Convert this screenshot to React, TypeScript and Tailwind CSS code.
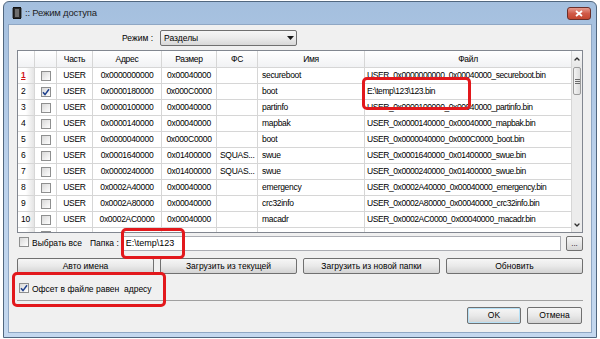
import { ChevronDown, ChevronUp } from "lucide-react";

type Row = {
  n: number;
  chk?: boolean;
  addr: string;
  size: string;
  fs?: string;
  name: string;
  file: string;
};

const rows: Row[] = [
  { n: 1, addr: "0x0000000000", size: "0x00040000", name: "secureboot", file: "USER_0x0000000000_0x00040000_secureboot.bin" },
  { n: 2, chk: true, addr: "0x0000180000", size: "0x000C0000", name: "boot", file: "E:\\temp\\123\\123.bin" },
  { n: 3, addr: "0x0000100000", size: "0x00040000", name: "partinfo", file: "USER_0x0000100000_0x00040000_partinfo.bin" },
  { n: 4, addr: "0x0000140000", size: "0x00040000", name: "mapbak", file: "USER_0x0000140000_0x00040000_mapbak.bin" },
  { n: 5, addr: "0x0000040000", size: "0x000C0000", name: "boot", file: "USER_0x0000040000_0x000C0000_boot.bin" },
  { n: 6, addr: "0x0001640000", size: "0x01400000", fs: "SQUAS...", name: "swue", file: "USER_0x0001640000_0x01400000_swue.bin" },
  { n: 7, addr: "0x0000240000", size: "0x01400000", fs: "SQUAS...", name: "swue", file: "USER_0x0000240000_0x01400000_swue.bin" },
  { n: 8, addr: "0x0002A40000", size: "0x00040000", name: "emergency", file: "USER_0x0002A40000_0x00040000_emergency.bin" },
  { n: 9, addr: "0x0002A80000", size: "0x00040000", name: "crc32info", file: "USER_0x0002A80000_0x00040000_crc32info.bin" },
  { n: 10, addr: "0x0002AC0000", size: "0x00040000", name: "macadr", file: "USER_0x0002AC0000_0x00040000_macadr.bin" },
];

const cols = "grid grid-cols-[17px_22px_36px_69px_55px_41px_107px_206px]";
const cell = "flex items-center border-r border-[#d6d6d6] overflow-hidden whitespace-nowrap";

function Box({ checked }: { checked?: boolean }) {
  return (
    <span className="inline-flex h-[10px] w-[10px] shrink-0 items-center justify-center border border-[#8e8f8f] bg-gradient-to-br from-[#d8d8d8] to-white">
      {checked && (
        <svg viewBox="0 0 8 8" className="h-[8px] w-[8px]">
          <path d="M1 4.2 L3 6.6 L7 1.2" fill="none" stroke="#1d3f8c" strokeWidth="1.5" />
        </svg>
      )}
    </span>
  );
}

function Btn({ children, className = "" }: { children: React.ReactNode; className?: string }) {
  return (
    <div
      className={
        "flex h-[16px] items-center justify-center rounded-[2px] border border-[#707070] bg-gradient-to-b from-[#f6f6f6] via-[#e9e9e9] to-[#d3d3d3] text-[8.5px] text-black " +
        className
      }
    >
      {children}
    </div>
  );
}

function Annot({ className }: { className: string }) {
  return <div className={"pointer-events-none absolute rounded-[5px] border-[3px] border-[#e2181c] " + className} />;
}

export default function App() {
  return (
    <div className="relative h-[339px] w-[600px] bg-white pb-[1px] pl-[3px] pr-[3px] pt-[1px] font-['Liberation_Sans',Arial,sans-serif] text-black">
      <div className="flex h-full flex-col rounded-t-[6px] border border-[#51677f] bg-gradient-to-b from-[#a4bfde] via-[#bcd2ec] to-[#c4d8ef]">
        {/* title */}
        <div className="flex h-[22px] shrink-0 items-center pl-[8px] pr-[5px]">
          <svg viewBox="0 0 10 12" className="h-[12px] w-[10px]">
            <rect x="1.5" y="0.5" width="7" height="11" fill="#2a2a2a" stroke="#111" />
            <rect x="3" y="2" width="4" height="8" fill="#6d6d6d" />
            <path d="M0 2h1.5M0 4h1.5M0 6h1.5M0 8h1.5M0 10h1.5M8.5 2h1.5M8.5 4h1.5M8.5 6h1.5M8.5 8h1.5M8.5 10h1.5" stroke="#333" strokeWidth="1" />
          </svg>
          <span className="ml-[3px] text-[9.5px] tracking-[-0.2px] text-[#1e1e1e]">:: Режим доступа</span>
          <div className="ml-auto flex h-[13px] w-[24px] items-center justify-center rounded-[3px] border border-[#6b2f2a] bg-gradient-to-b from-[#e59a8e] via-[#d05a48] to-[#c4462f]">
            <svg viewBox="0 0 8 7" className="h-[7px] w-[8px]">
              <path d="M1 1L7 6M7 1L1 6" stroke="#fff" strokeWidth="1.8" />
            </svg>
          </div>
        </div>

        {/* client */}
        <div className="mx-[4px] mb-[4px] flex flex-1 flex-col border border-[#8fa7c4] bg-[#f0f0f0] px-[8px] pt-[5px]">
          {/* mode */}
          <div className="flex h-[16px] items-center">
            <div className="w-[136px] text-right text-[8.5px]">Режим :</div>
            <div className="ml-[7px] flex h-[16px] w-[137px] items-center rounded-[2px] border border-[#707070] bg-gradient-to-b from-[#f6f6f6] via-[#ebebeb] to-[#d8d8d8] pl-[3px] pr-[2px] text-[8.5px]">
              <span>Разделы</span>
              <svg viewBox="0 0 7 4" className="ml-auto h-[4px] w-[7px]">
                <path d="M0 0H7L3.5 4Z" fill="#1a1a1a" />
              </svg>
            </div>
          </div>

          {/* grid */}
          <div className="mt-[4px] flex h-[183px] overflow-hidden border border-[#828790] bg-white text-[8.5px] tracking-[-0.3px]">
            <div className="flex-1 overflow-hidden">
              <div className={cols + " h-[17px] border-b border-[#d6d6d6] bg-gradient-to-b from-white to-[#f1f2f4]"}>
                {["", "", "Часть", "Адрес", "Размер", "ФС", "Имя", "Файл"].map((h, i) => (
                  <div key={i} className={cell + " justify-center " + (i === 7 ? "border-r-0" : "")}>
                    {h}
                  </div>
                ))}
              </div>
              {rows.map((r) => (
                <div key={r.n} className={cols + " h-[16px] border-b border-[#d6d6d6]"}>
                  <div className={cell + " bg-gradient-to-r from-white via-white to-[#e4e4e4] pl-[3px]"}>
                    <span className={r.n === 1 ? "font-bold text-[#d0161b] underline" : ""}>{r.n}</span>
                  </div>
                  <div className={cell + " justify-center"}>
                    <Box checked={r.chk} />
                  </div>
                  <div className={cell + " justify-center"}>USER</div>
                  <div className={cell + " justify-center"}>{r.addr}</div>
                  <div className={cell + " justify-center"}>{r.size}</div>
                  <div className={cell + " pl-[3px]"}>{r.fs}</div>
                  <div className={cell + " pl-[4px]"}>{r.name}</div>
                  <div className={cell + " border-r-0 pl-[2px] tracking-[-0.42px]"}>{r.file}</div>
                </div>
              ))}
              {/* next row, mostly scrolled out of view */}
              <div className={cols + " h-[16px]"}>
                <div className={cell + " bg-gradient-to-r from-white via-white to-[#e4e4e4]"} />
                <div className={cell + " items-start justify-center pt-[3px]"}>
                  <Box />
                </div>
                <div className={cell} />
                <div className={cell} />
                <div className={cell} />
                <div className={cell} />
                <div className={cell} />
                <div className={cell + " border-r-0"} />
              </div>
            </div>
            {/* scrollbar */}
            <div className="flex w-[11px] shrink-0 flex-col border-l border-[#d6d6d6] bg-[#ececec]">
              <div className="flex h-[16px] items-center justify-center bg-gradient-to-b from-[#f8f8f8] to-[#e6e6e6]">
                <ChevronUp className="h-[8px] w-[8px] text-[#303030]" strokeWidth={4} />
              </div>
              <div className="mx-[1px] flex h-[28px] items-center justify-center rounded-[2px] border border-[#9c9c9c] bg-gradient-to-r from-[#f3f3f3] to-[#dcdcdc]">
                <div className="flex flex-col gap-[1px]">
                  <div className="h-px w-[5px] bg-[#6a6a6a]" />
                  <div className="h-px w-[5px] bg-[#6a6a6a]" />
                  <div className="h-px w-[5px] bg-[#6a6a6a]" />
                </div>
              </div>
              <div className="flex-1" />
              <div className="flex h-[14px] items-start justify-center pt-[3px]">
                <ChevronDown className="h-[8px] w-[8px] text-[#303030]" strokeWidth={4} />
              </div>
            </div>
          </div>

          {/* folder */}
          <div className="mt-[3px] flex h-[15px] items-center text-[8.5px]">
            <div className="ml-[2px]">
              <Box />
            </div>
            <span className="ml-[3px]">Выбрать все</span>
            <span className="ml-[8px]">Папка :</span>
            <div className="ml-[4px] flex h-[15px] flex-1 items-center border border-[#abadb3] bg-white pl-[2px] text-[9px]">
              E:\temp\123
            </div>
            <div className="ml-[5px] flex h-[15px] w-[17px] items-end justify-center rounded-[2px] border border-[#707070] bg-gradient-to-b from-[#f6f6f6] to-[#d6d6d6] pb-[2px] text-[8px] leading-none">
              ...
            </div>
          </div>

          {/* buttons */}
          <div className="mt-[7px] grid grid-cols-4 gap-[6px]">
            <Btn>Авто имена</Btn>
            <Btn>Загрузить из текущей</Btn>
            <Btn>Загрузить из новой папки</Btn>
            <Btn>Обновить</Btn>
          </div>

          {/* offset */}
          <div className="mt-[9px] flex h-[12px] items-center text-[8.5px]">
            <div className="ml-[2px]">
              <Box checked />
            </div>
            <span className="ml-[3px]">Офсет в файле равен&nbsp; адресу</span>
          </div>

          <div className="mt-[5px] h-[2px] border-t border-[#a0a0a0] border-b-white" />

          <div className="mt-[5px] flex justify-end gap-[6px] pr-px">
            <Btn className="h-[17px] w-[54px] border-[#3c7fb1] shadow-[inset_0_0_0_1px_#b6e1f7]">OK</Btn>
            <Btn className="h-[17px] w-[55px]">Отмена</Btn>
          </div>
        </div>
      </div>

      <Annot className="left-[362px] top-[77px] h-[33px] w-[109px]" />
      <Annot className="left-[121px] top-[228px] h-[31px] w-[64px]" />
      <Annot className="left-[12px] top-[272px] h-[35px] w-[154px]" />
    </div>
  );
}
